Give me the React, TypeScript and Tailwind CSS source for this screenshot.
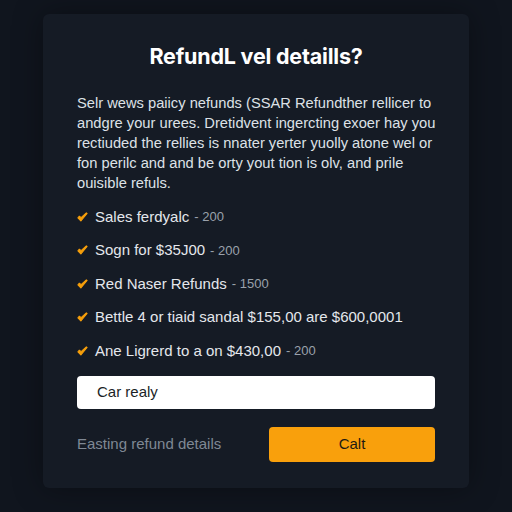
export default function App() {
  const lines = [
    'Selr wews paiicy nefunds (SSAR Refundther rellicer to',
    'andgre your urees. Dretidvent ingercting exoer hay you',
    'rectiuded the rellies is nnater yerter yuolly atone wel or',
    'fon perilc and and be orty yout tion is olv, and prile',
    'ouisible refuls.',
  ]

  const items: [string, string][] = [
    ['Sales ferdyalc', '200'],
    ['Sogn for $35J00', '200'],
    ['Red Naser Refunds', '1500'],
    ['Bettle 4 or tiaid sandal $155,00 are $600,0001', ''],
    ['Ane Ligrerd to a on $430,00', '200'],
  ]

  return (
    <main className="w-[512px] h-[512px] bg-[#10151e] flex items-start justify-center pt-[14px]" style={{ fontFamily: '"Liberation Sans", Arial, sans-serif' }}>
      <div className="w-[426px] h-[474px] rounded-md bg-[#151b25] px-[34px] pt-[26px] shadow-[0_0_30px_rgba(0,0,0,0.35)]">
        <h1 className="text-center text-[21.5px] font-bold text-white leading-[32px] tracking-[-0.2px]" style={{ fontFamily: 'Inter, "Open Sans", sans-serif' }}>
          RefundL vel detaills?
        </h1>

        <div className="mt-[21px] text-[14.7px] leading-[20px] text-[#dde1e7] whitespace-nowrap">
          {lines.map(l => <div key={l}>{l}</div>)}
        </div>

        <div className="mt-[14px] flex flex-col gap-[13.5px]">
          {items.map(([t, n]) => (
            <div key={t} className="flex items-center h-[20px] text-[15px] text-[#e4e7ec]">
              <svg className="w-[11px] h-[11px] mr-[7px] flex-shrink-0" viewBox="0 0 12 12">
                <path d="M1 6.5 L4.2 9.8 L11 1.5 L10.2 1 L4.5 6.2 L2.6 4.6 Z" fill="#f59e0b" stroke="#f59e0b" strokeWidth={1.2} strokeLinejoin="round" />
              </svg>
              <span>{t}</span>
              {n && <span className="ml-[5px] text-[#9aa1ab] text-[13px]">- {n}</span>}
            </div>
          ))}
        </div>

        <div className="mt-[15px] h-[33px] rounded bg-white flex items-center px-[20px] text-[15px] text-[#1b1f26]">
          Car realy
        </div>

        <div className="mt-[18px] flex items-center justify-between">
          <span className="text-[15px] text-[#7f8894]">Easting refund details</span>
          <button className="w-[166px] h-[35px] rounded bg-[#f9a00c] text-[15px] text-[#1e1a12]">
            Calt
          </button>
        </div>
      </div>
    </main>
  )
}
